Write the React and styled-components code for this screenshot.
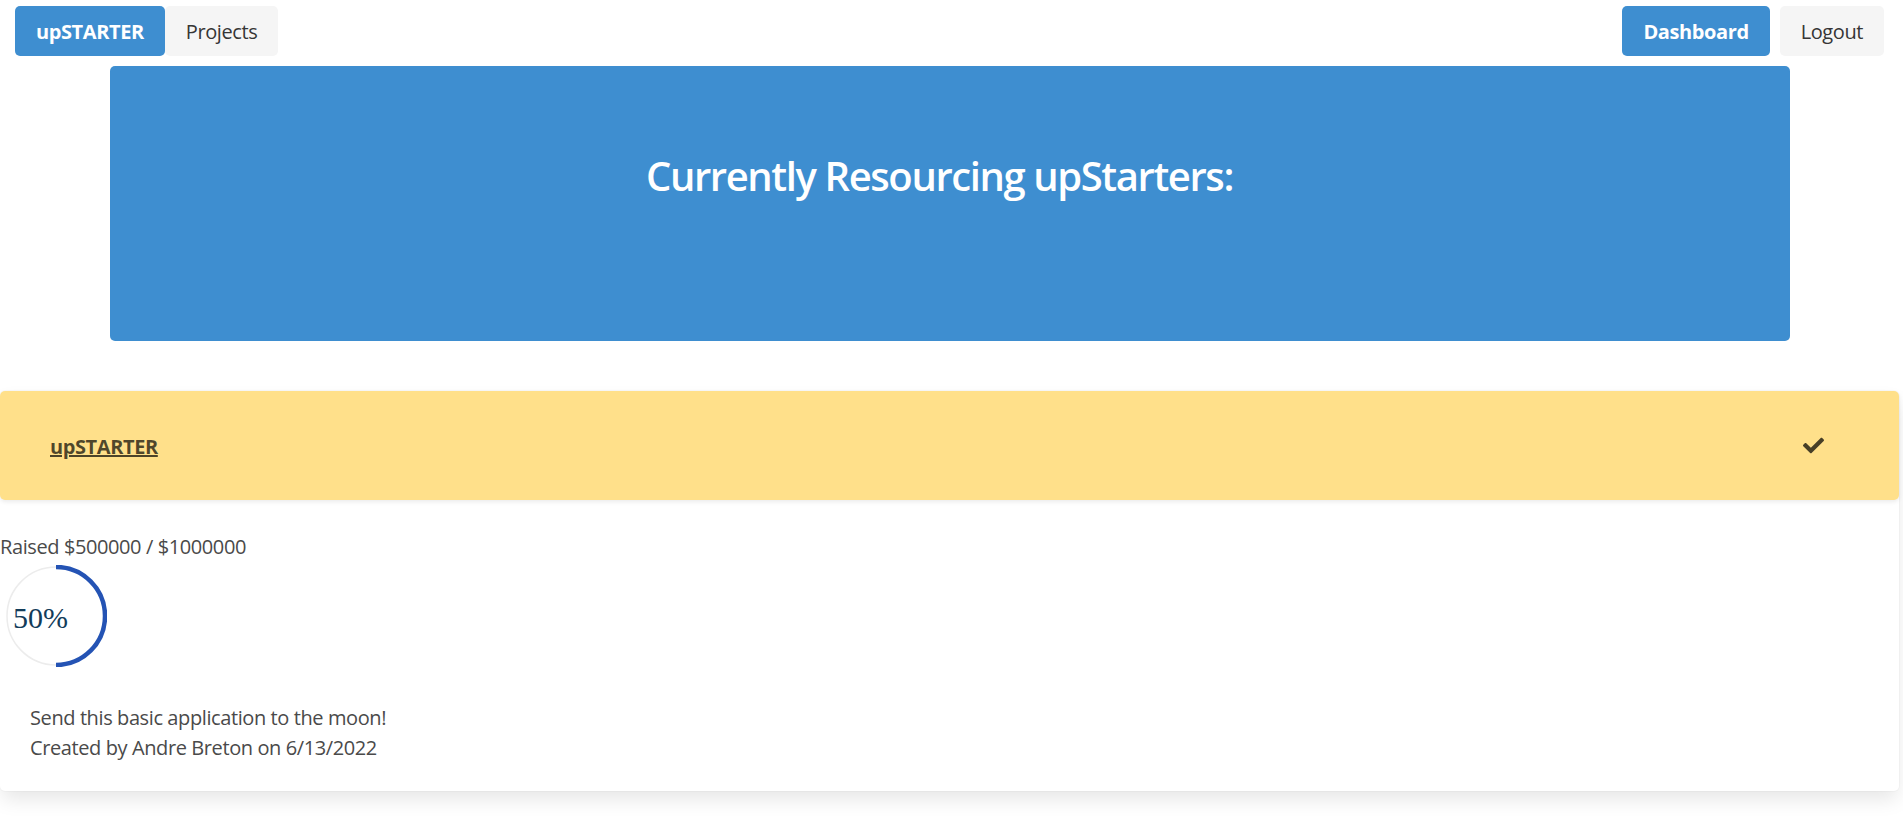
import React from "react";
import styled, { createGlobalStyle } from "styled-components";
import { FaCheck } from "react-icons/fa";

const GlobalStyle = createGlobalStyle`
  html, body {
    margin: 0;
    padding: 0;
    background: #fff;
    overflow: hidden;
  }
  body {
    font-family: "Open Sans", "Noto Sans", sans-serif;
    font-size: 20px;
    letter-spacing: -0.4px;
    color: #4a4a4a;
  }
`;

const Page = styled.div`
  width: 1899px;
  min-height: 832px;
`;

const Nav = styled.nav`
  display: flex;
  justify-content: space-between;
  align-items: center;
  padding: 6px 15px 0 15px;
`;

const NavGroup = styled.div`
  display: flex;
  gap: ${({ $gap }) => $gap || 0}px;
`;

const NavButton = styled.a`
  display: flex;
  align-items: center;
  justify-content: center;
  box-sizing: border-box;
  height: 50px;
  padding: 0 ${({ $pad }) => $pad || 21}px;
  border-radius: 5px;
  font-size: 20px;
  text-decoration: none;
  cursor: pointer;
  background: ${({ $primary }) => ($primary ? "#3e8ed0" : "#f5f5f5")};
  color: ${({ $primary }) => ($primary ? "#fff" : "#363636")};
  font-weight: ${({ $primary }) => ($primary ? 700 : 400)};
`;

const Banner = styled.section`
  box-sizing: border-box;
  width: 1680px;
  height: 275px;
  margin: 10px auto 0;
  padding-top: 87px;
  background: #3e8ed0;
  border-radius: 5px;
`;

const BannerTitle = styled.h1`
  margin: 0;
  padding-right: 20px;
  text-align: center;
  color: #fff;
  font-size: 40px;
  font-weight: 600;
  line-height: 1.125;
  letter-spacing: -1.4px;
`;

const Card = styled.div`
  margin-top: 50px;
  background: #fff;
  border-radius: 5px;
  box-shadow: 0 10px 20px -2.5px rgba(10, 10, 10, 0.1),
    0 0 0 1px rgba(10, 10, 10, 0.02);
`;

const CardHeader = styled.header`
  display: flex;
  align-items: center;
  justify-content: space-between;
  height: 109px;
  padding: 0 75px 0 50px;
  background: #ffe08a;
  border-radius: 5px;
  box-shadow: 0 2px 4px rgba(10, 10, 10, 0.08);
  color: rgba(0, 0, 0, 0.7);
`;

const CardTitle = styled.a`
  font-weight: 700;
  font-size: 20px;
  text-decoration: underline;
  color: inherit;
  margin-top: 2px;
`;

const CheckIcon = styled(FaCheck)`
  width: 21px;
  height: 21px;
  color: rgba(0, 0, 0, 0.72);
`;

const CardBody = styled.div`
  padding: 32px 0 28px;
  line-height: 30px;
`;

const Raised = styled.div`
  font-size: 20px;
`;

const Progress = styled.svg`
  display: block;
  width: 102px;
  height: 102px;
  margin: 3px 0 0 5px;
`;

const Description = styled.div`
  margin-top: 36px;
  padding-left: 30px;
  font-size: 20px;
`;

const ProgressRing = ({ percent }) => {
  const r = 49;
  const angle = (percent / 100) * 2 * Math.PI;
  const ex = 51 + r * Math.sin(angle);
  const ey = 51 - r * Math.cos(angle);
  const large = percent > 50 ? 1 : 0;
  return (
    <Progress viewBox="0 0 102 102">
      <circle cx="51" cy="51" r={r} fill="none" stroke="#ececec" strokeWidth="1.5" />
      <path
        d={`M 51 2 A ${r} ${r} 0 ${large} 1 ${ex.toFixed(2)} ${ey.toFixed(2)}`}
        fill="none"
        stroke="#2453b4"
        strokeWidth="4.5"
      />
      <text
        x="8"
        y="63"
        fill="#123c5a"
        fontFamily="'Liberation Serif', serif"
        fontSize="30"
        letterSpacing="0"
      >
        {`${percent}%`}
      </text>
    </Progress>
  );
};

export default function App() {
  return (
    <Page>
      <GlobalStyle />
      <Nav>
        <NavGroup>
          <NavButton $primary $pad={21}>upSTARTER</NavButton>
          <NavButton $pad={21}>Projects</NavButton>
        </NavGroup>
        <NavGroup $gap={10}>
          <NavButton $primary $pad={21}>Dashboard</NavButton>
          <NavButton $pad={21}>Logout</NavButton>
        </NavGroup>
      </Nav>
      <Banner>
        <BannerTitle>Currently Resourcing upStarters:</BannerTitle>
      </Banner>
      <Card>
        <CardHeader>
          <CardTitle>upSTARTER</CardTitle>
          <CheckIcon />
        </CardHeader>
        <CardBody>
          <Raised>Raised $500000 / $1000000</Raised>
          <ProgressRing percent={50} />
          <Description>
            <div>Send this basic application to the moon!</div>
            <div>Created by Andre Breton on 6/13/2022</div>
          </Description>
        </CardBody>
      </Card>
    </Page>
  );
}
